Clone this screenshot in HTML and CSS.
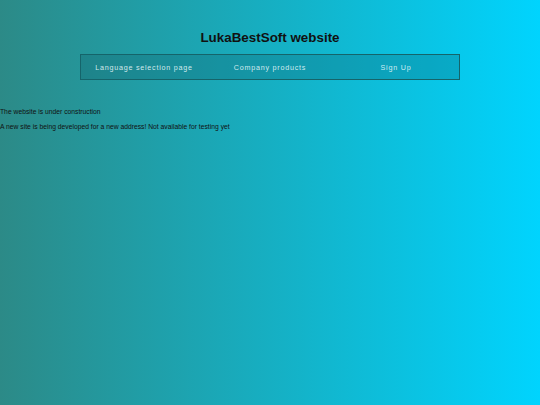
FILE: index.html
```html
<!DOCTYPE html>
<html>
<head>
<meta charset="utf-8">
<link rel="stylesheet" href="styles.css">
</head>
<body>
<header class="header">
  <h1 class="title">LukaBestSoft website</h1>
  <nav class="nav">
    <a class="nav-item">Language selection page</a>
    <a class="nav-item">Company products</a>
    <a class="nav-item">Sign Up</a>
  </nav>
</header>
<main class="content">
  <p class="text">The website is under construction</p>
  <p class="text">A new site is being developed for a new address! Not available for testing yet</p>
</main>
</body>
</html>
```
FILE: styles.css
```css
html, body {
  margin: 0;
  padding: 0;
  height: 100%;
}
body {
  background: linear-gradient(to right, #2c8a87, #00d4fe);
  font-family: "Liberation Sans", Arial, sans-serif;
  color: #111;
}
.header {
  display: flex;
  flex-direction: column;
  align-items: center;
  padding-top: 29px;
}
.title {
  margin: 0;
  font-size: 13.4px;
  font-weight: bold;
  line-height: 17px;
}
.nav {
  margin-top: 8px;
  width: 378px;
  height: 24px;
  display: flex;
  align-items: center;
  background: rgba(10, 80, 90, 0.25);
  border: 1px solid #15646a;
}
.nav-item {
  flex: 1;
  text-align: center;
  color: rgba(240, 252, 254, 0.85);
  font-size: 7.2px;
  letter-spacing: 0.75px;
}
.content {
  padding-top: 28px;
}
.text {
  margin: 0 0 7px 0;
  font-size: 6.75px;
  line-height: 8px;
}
```
